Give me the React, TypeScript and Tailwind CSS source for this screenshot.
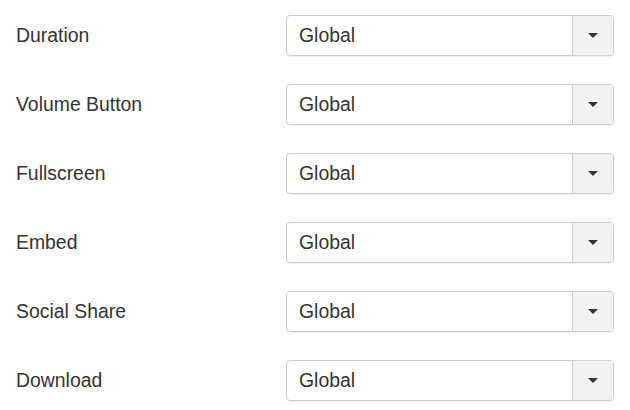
import React from "react";

const rows = ["Duration", "Volume Button", "Fullscreen", "Embed", "Social Share", "Download"];

export default function App() {
  return (
    <div
      className="w-[630px] h-[410px] bg-white flex flex-col gap-[28px] pt-[15px] pl-4 text-[#333] text-[19.4px]"
      style={{ fontFamily: '"Liberation Sans", Arial, sans-serif' }}
    >
      {rows.map((r) => (
        <div key={r} className="flex items-center h-[41px]">
          <div className="w-[270px]">{r}</div>
          <div className="w-[328px] h-[41px] border border-[#ccc] rounded-[4px] flex overflow-hidden shadow-[0_1px_1px_rgba(0,0,0,0.06)]">
            <div className="flex-1 flex items-center pl-[12px]">Global</div>
            <div className="w-[41px] border-l border-[#ccc] bg-[#f2f2f2] flex items-center justify-center">
              <svg width="10" height="5" viewBox="0 0 10 5">
                <path d="M0 0 L10 0 L5 5 Z" fill="#333" />
              </svg>
            </div>
          </div>
        </div>
      ))}
    </div>
  );
}
